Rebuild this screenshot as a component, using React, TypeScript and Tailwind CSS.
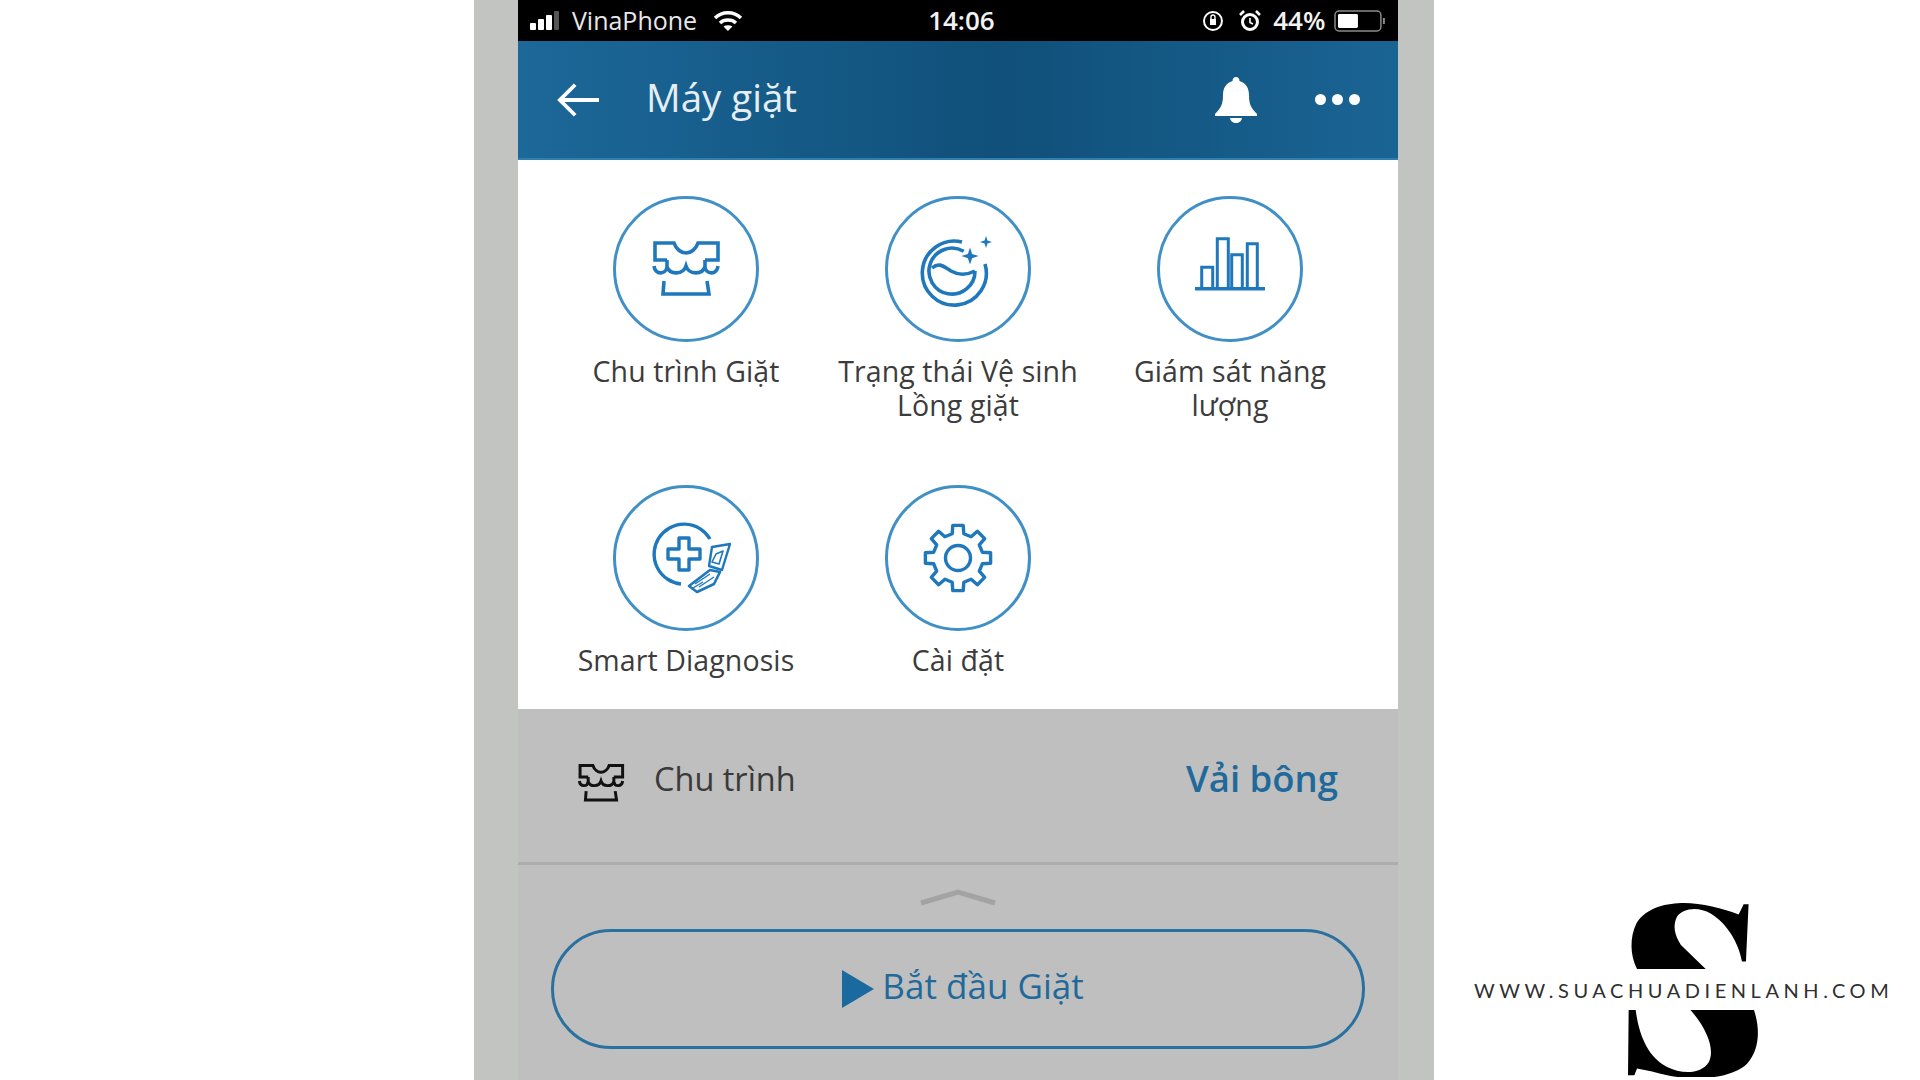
import React from "react";

const gearPath = (() => {
  const cx = 45;
  const cy = 45;
  const teeth = 8;
  const pts: string[] = [];
  for (let i = 0; i < teeth; i++) {
    const a = (i * 2 * Math.PI) / teeth - Math.PI / 2;
    const step = (2 * Math.PI) / teeth;
    const p = (r: number, t: number) =>
      `${(cx + r * Math.cos(a + t * step)).toFixed(1)} ${(cy + r * Math.sin(a + t * step)).toFixed(1)}`;
    pts.push(`${i === 0 ? "M" : "L"}${p(25, -0.3)}`);
    pts.push(`L${p(33, -0.2)}`);
    pts.push(`L${p(33, 0.2)}`);
    pts.push(`L${p(25, 0.3)}`);
  }
  return pts.join(" ") + " Z";
})();

const ShirtIcon = ({ className, strokeWidth = 3.6 }: { className: string; strokeWidth?: number }) => (
  <svg viewBox="8 15 74 62" className={className} fill="none" stroke="currentColor" strokeWidth={strokeWidth}>
    <path d="M26 37H14V20H33C35 26 40 30 45 30C50 30 55 26 57 20H77V37H64" />
    <path d="M13 43C14 52 25 52 26 44V37" />
    <path d="M26 44C29 52 42 52 45 43C48 52 61 52 64 44" />
    <path d="M64 37V44C65 52 76 52 77 43" />
    <path d="M23 58L22 71H68L66 58" />
  </svg>
);

const Sparkle = ({ x, y, r }: { x: number; y: number; r: number }) => (
  <path
    d={`M${x} ${y - r}L${x + r * 0.25} ${y - r * 0.25}L${x + r} ${y}L${x + r * 0.25} ${y + r * 0.25}L${x} ${y + r}L${x - r * 0.25} ${y + r * 0.25}L${x - r} ${y}L${x - r * 0.25} ${y - r * 0.25}Z`}
    fill="currentColor"
    stroke="none"
  />
);

const DrumIcon = () => (
  <svg viewBox="0 0 90 90" className="w-[90px] h-[90px]" fill="none" stroke="currentColor" strokeWidth="3.6">
    <path d="M49 18A32 32 0 1 0 72 40" />
    <path d="M50.7 27.3A23 23 0 1 0 62 47" />
    <path d="M19 44C26 38 30 42 38 47C45 51 54 51 62 47" />
    <Sparkle x={57} y={32} r={8.5} />
    <Sparkle x={73} y={18} r={6} />
  </svg>
);

const BarsIcon = () => (
  <svg viewBox="0 0 90 90" className="w-[90px] h-[90px]" fill="none" stroke="currentColor" strokeWidth="3">
    <path d="M16.7 64.7V43.3H27.7V64.7" />
    <path d="M32.3 64.7V14.7H43.3V64.7" />
    <path d="M46.7 64.7V30.7H57.3V64.7" />
    <path d="M62.3 64.7V19.7H72.3V64.7" />
    <path d="M10 64.7H80" strokeWidth="3.4" />
  </svg>
);

const DiagnosisIcon = () => (
  <svg viewBox="0 0 90 90" className="w-[90px] h-[90px] overflow-visible" fill="none" stroke="currentColor" strokeWidth="2.6" strokeLinejoin="round">
    <path d="M69 26A30 30 0 1 0 40 71" strokeWidth="3.4" />
    <path d="M38 25H48V36H59V46H48V57H38V46H27V36H38Z" strokeWidth="3.4" />
    <path d="M71 34L89 31L81 57L68 53Z" strokeWidth="2.4" />
    <path d="M75 41L82 38L78 51L71 49Z" strokeWidth="1.6" />
    <path d="M48 73L69 57L79 59L73 71L56 79Z" strokeWidth="2.6" />
    <path d="M54 71L69 61M58 74L73 64M52 75L62 69" strokeWidth="1.4" />
  </svg>
);

const GearIcon = () => (
  <svg viewBox="0 0 90 90" className="w-[90px] h-[90px]" fill="none" stroke="currentColor" strokeWidth="3.4" strokeLinejoin="round">
    <path d={gearPath} />
    <circle cx="45" cy="45" r="12.5" />
  </svg>
);

const items = [
  { label: "Chu trình Giặt", icon: <ShirtIcon className="w-[74px] h-[62px]" /> },
  { label: "Trạng thái Vệ sinh\nLồng giặt", icon: <DrumIcon /> },
  { label: "Giám sát năng\nlượng", icon: <BarsIcon /> },
  { label: "Smart Diagnosis", icon: <DiagnosisIcon /> },
  { label: "Cài đặt", icon: <GearIcon /> },
];

const StatusBar = () => (
  <div className="h-[41px] bg-black text-[#f2f2f2] flex items-center pl-[12px] pr-[12px] relative">
    <div className="flex items-end gap-[2px] h-[19px] w-[36px]">
      <div className="w-[6px] h-[7px] bg-white rounded-[1px]" />
      <div className="w-[6px] h-[11px] bg-white rounded-[1px]" />
      <div className="w-[6px] h-[15px] bg-white rounded-[1px]" />
      <div className="w-[5px] h-[19px] bg-[#555555] rounded-[1px]" />
    </div>
    <span className="ml-[6px] w-[141px] text-[25px] text-[#e8e8e8]">VinaPhone</span>
    <svg viewBox="0 0 30 22" className="w-[30px] h-[22px]" fill="none" stroke="white" strokeWidth="3.4">
      <path d="M2 8C9 1 21 1 28 8" />
      <path d="M7 13C11 9 19 9 23 13" />
      <path d="M15 21L10.5 16.5C13 15 17 15 19.5 16.5Z" fill="white" stroke="none" />
    </svg>
    <span className="ml-[184px] w-[70px] text-center text-[26px] font-semibold whitespace-nowrap">14:06</span>
    <svg viewBox="0 0 22 22" className="ml-[206px] w-[22px] h-[22px]" fill="none" stroke="white" strokeWidth="2">
      <circle cx="11" cy="11" r="9" />
      <rect x="8" y="9" width="6" height="6" fill="white" stroke="none" />
      <path d="M9 9V7A2 2 0 0 1 13 7V9" strokeWidth="1.4" />
    </svg>
    <svg viewBox="0 0 22 22" className="ml-[15px] w-[22px] h-[22px]" fill="none" stroke="white" strokeWidth="3">
      <circle cx="11" cy="12" r="7.5" />
      <path d="M11 8V12.5L14 14" strokeWidth="1.6" />
      <path d="M1 5L5 1M21 5L17 1" strokeWidth="2.6" />
    </svg>
    <span className="ml-[12px] w-[53px] text-[26px] font-semibold whitespace-nowrap">44%</span>
    <svg viewBox="0 0 52 22" className="ml-[8px] w-[52px] h-[22px]" fill="none">
      <rect x="1" y="1" width="46" height="20" rx="4" stroke="#8a8a8a" strokeWidth="1.5" />
      <rect x="4" y="4" width="20" height="14" rx="1.5" fill="white" />
      <rect x="49" y="8" width="2" height="6" fill="#8a8a8a" />
    </svg>
  </div>
);

const Header = () => (
  <div className="h-[119px] flex items-center text-white bg-gradient-to-r from-[#1c6899] via-[#10507a] via-55% to-[#1a6494] border-b-2 border-[#2f7fb0]">
    <svg viewBox="0 0 44 36" className="ml-[39px] w-[42px] h-[36px]" fill="none" stroke="white" strokeWidth="4">
      <path d="M44 18H3M19 2L3 18L19 34" />
    </svg>
    <span className="ml-[47px] text-[38.5px] leading-none pb-[4px] text-[#e6eef4] whitespace-nowrap">Máy giặt</span>
    <svg viewBox="0 0 42 46" className="ml-[418px] w-[42px] h-[46px]" fill="white">
      <path d="M21 0C23 0 24.5 1.5 24.5 4C31 6 34 11 34 18C34 27 36 31 42 37V39H0V37C6 31 8 27 8 18C8 11 11 6 17.5 4C17.5 1.5 19 0 21 0Z" />
      <path d="M15 41H27C26.5 44 24 46 21 46C18 46 15.5 44 15 41Z" />
    </svg>
    <div className="ml-[58px] flex gap-[6px]">
      <div className="w-[11px] h-[11px] rounded-full bg-white" />
      <div className="w-[11px] h-[11px] rounded-full bg-white" />
      <div className="w-[11px] h-[11px] rounded-full bg-white" />
    </div>
  </div>
);

const MenuGrid = () => (
  <div className="h-[549px] bg-white grid grid-cols-[272px_272px_272px] grid-rows-[289px_260px] pl-[32px] pt-[36px] text-[#3c3c3c]">
    {items.map((item) => (
      <div key={item.label} className="flex flex-col items-center">
        <div className="w-[146px] h-[146px] shrink-0 rounded-full border-[3px] border-[#4090c6] text-[#1f78bb] flex items-center justify-center">
          {item.icon}
        </div>
        <div className="mt-[12px] text-[28.5px] leading-[34px] text-center tracking-[0.1px] whitespace-pre-line">
          {item.label}
        </div>
      </div>
    ))}
  </div>
);

const ControlPanel = () => (
  <div className="flex-1 bg-[#bfbfbf] flex flex-col">
    <div className="h-[156px] flex items-center pl-[58px] pr-[60px] border-b-[3px] border-[#adadad] pb-[6px]">
      <ShirtIcon className="w-[50px] h-[44px] text-[#111111]" strokeWidth={4.4} />
      <span className="ml-[28px] text-[32.5px] text-[#3a3a3a] pb-[6px]">Chu trình</span>
      <span className="ml-auto text-[36.5px] font-semibold text-[#1f6a9b] pb-[8px]">Vải bông</span>
    </div>
    <div className="h-[64px] flex justify-center pt-[24px]">
      <svg viewBox="0 0 78 18" className="w-[78px] h-[18px]" fill="none" stroke="#a3a3a3" strokeWidth="5">
        <path d="M2 14L39 3L76 14" />
      </svg>
    </div>
    <div className="mx-[33px] h-[120px] rounded-full border-[3px] border-[#2a719f] flex items-center justify-center gap-[8px] text-[#1f6a9b] pl-[10px]">
      <svg viewBox="0 0 32 38" className="w-[32px] h-[38px]">
        <path d="M0 0L32 19L0 38Z" fill="#1b6a9f" />
      </svg>
      <span className="text-[35px] leading-none pb-[8px]">Bắt đầu Giặt</span>
    </div>
  </div>
);

const Logo = () => (
  <div className="flex flex-col items-start pt-[903px]">
    <svg viewBox="505 68 365 200" className="ml-[195px] w-[122px] h-[66px]" fill="#000000">
      <path d="M527 268C505 225 505 170 525 130C555 80 620 68 670 68C720 68 790 85 835 103L850 72H865L857 245H845C835 190 800 130 750 100C715 78 665 82 648 110C635 135 640 165 660 195L735 268Z" />
    </svg>
    <div className="mt-[11px] ml-[40px] text-[20px] leading-[20px] tracking-[4.55px] text-[#2f2f2f] whitespace-nowrap font-normal">
      WWW.SUACHUADIENLANH.COM
    </div>
    <svg viewBox="500 390 395 200" className="mt-[10px] ml-[193px] w-[132px] h-[67px]" fill="#000000">
      <path d="M505 390H526C535 460 560 530 620 560C660 580 720 585 745 545C765 505 735 440 690 390H880C900 450 895 510 860 550C810 600 690 600 620 585C590 578 560 570 530 565L522 585H503Z" />
    </svg>
  </div>
);

export default function App() {
  return (
    <div className="w-[1920px] h-[1080px] bg-white flex overflow-hidden" style={{ fontFamily: '"Open Sans", "Noto Sans", sans-serif' }}>
      <div className="w-[474px] shrink-0" />
      <div className="w-[960px] h-[1080px] shrink-0 bg-[#c1c4c0] px-[44px]">
        <div className="w-[880px] h-[1080px] flex flex-col">
          <StatusBar />
          <Header />
          <MenuGrid />
          <ControlPanel />
        </div>
      </div>
      <div className="flex-1" style={{ fontFamily: 'Lato, "Open Sans", sans-serif' }}>
        <Logo />
      </div>
    </div>
  );
}
